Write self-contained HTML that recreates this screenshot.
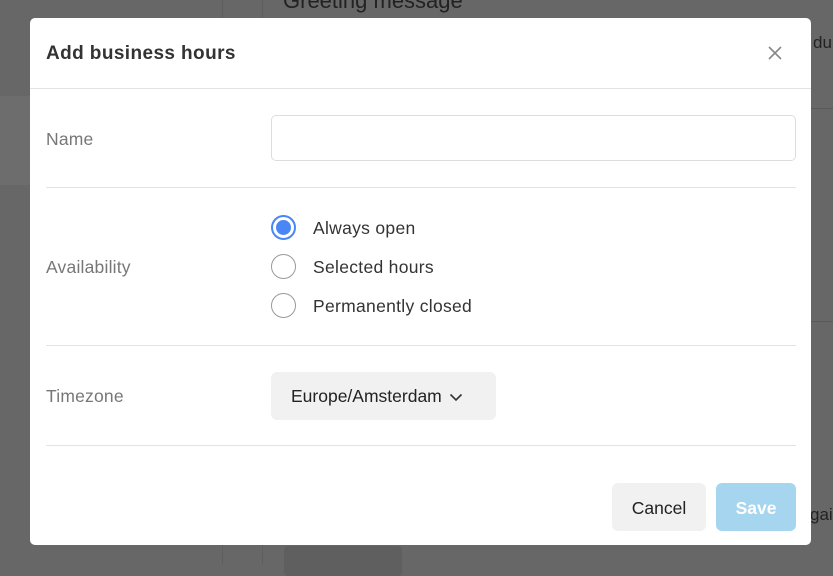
<!DOCTYPE html>
<html><head><style>
*{box-sizing:border-box;margin:0;padding:0}
html,body{width:833px;height:564px}
body{background:#676767;position:relative;overflow:hidden;font-family:"Liberation Sans",sans-serif}
.bg1{position:absolute;left:222px;top:0;width:1px;height:564px;background:#5e5e5e}
.bg2{position:absolute;left:262px;top:0;width:1px;height:564px;background:#5e5e5e}
.bgt{position:absolute;left:283px;top:-12px;font-size:22px;color:#222}
.bgd{position:absolute;left:813px;top:33px;font-size:17px;color:#222}
.bgg{position:absolute;left:810px;top:505px;font-size:17px;color:#222}
.bgl{position:absolute;left:0;top:96px;width:222px;height:89px;background:#6d6d6d}
.bgline{position:absolute;left:811px;top:108px;width:22px;height:1px;background:#5a5a5a}
.bgline2{position:absolute;left:811px;top:321px;width:22px;height:1px;background:#5a5a5a}
.bgb{position:absolute;left:284px;top:546px;width:118px;height:30px;background:#5f5f5f;border-radius:4px}
.m{position:absolute;left:30px;top:18px;width:781px;height:527px;background:#fff;border-radius:5px}
.h{height:71px;border-bottom:1px solid #e3e3e3;position:relative}
.h h1{position:absolute;left:16px;top:25px;font-size:19px;font-weight:bold;color:#333;letter-spacing:0.4px}
.x{position:absolute;left:737px;top:27px;width:16px;height:16px}
.lbl{position:absolute;left:16px;font-size:17.5px;color:#777;letter-spacing:0.2px}
.hr{position:absolute;left:16px;width:750px;height:1px;background:#e3e3e3}
.inp{position:absolute;left:241px;top:97px;width:525px;height:46px;border:1px solid #ddd;border-radius:5px}
.r{position:absolute;left:241px;width:25px;height:25px;border:1px solid #999;border-radius:50%}
.r.on{border:2px solid #4a86f5}
.r.on::after{content:"";position:absolute;left:3px;top:3px;width:15px;height:15px;border-radius:50%;background:#4a86f5}
.rt{position:absolute;left:283px;font-size:17.5px;color:#333;letter-spacing:0.3px}
.sel{position:absolute;left:241px;top:354px;width:225px;height:48px;background:#f1f1f1;border-radius:6px;font-size:17.5px;color:#222;padding:14px 0 0 20px}
.btn{position:absolute;top:465px;height:48px;border-radius:6px;font-size:17.5px;text-align:center;line-height:50px}
</style></head><body>
<div class="bgl"></div><div class="bg1"></div><div class="bg2"></div>
<div class="bgt">Greeting message</div><div class="bgd">du</div><div class="bgg">gai</div>
<div class="bgline"></div><div class="bgline2"></div><div class="bgb"></div>
<div class="m">
<div class="h"><h1>Add business hours</h1>
<svg class="x" viewBox="0 0 16 16"><path d="M2 2L14 14M14 2L2 14" stroke="#888" stroke-width="1.6"/></svg></div>
<div class="lbl" style="top:111px">Name</div>
<div class="inp"></div>
<div class="hr" style="top:169px"></div>
<div class="lbl" style="top:239px">Availability</div>
<div class="r on" style="top:197px"></div><div class="rt" style="top:200px">Always open</div>
<div class="r" style="top:236px"></div><div class="rt" style="top:239px">Selected hours</div>
<div class="r" style="top:275px"></div><div class="rt" style="top:278px">Permanently closed</div>
<div class="hr" style="top:327px"></div>
<div class="lbl" style="top:368px">Timezone</div>
<div class="sel">Europe/Amsterdam <svg width="14" height="9" viewBox="0 0 14 9" style="margin-left:2px"><path d="M1.5 1.5L7 7L12.5 1.5" fill="none" stroke="#333" stroke-width="1.6"/></svg></div>
<div class="hr" style="top:427px"></div>
<div class="btn" style="left:582px;width:94px;background:#f1f1f1;color:#222">Cancel</div>
<div class="btn" style="left:686px;width:80px;background:#a5d5ef;color:#fff;font-weight:bold">Save</div>
</div>
</body></html>
